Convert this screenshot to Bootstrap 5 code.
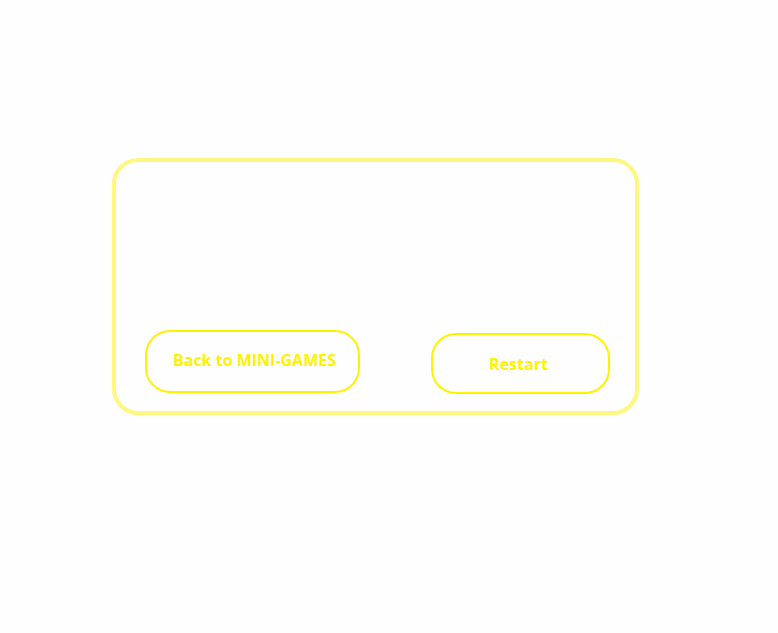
<!DOCTYPE html>
<html lang="en">
<head>
<meta charset="utf-8">
<meta name="viewport" content="width=device-width, initial-scale=1">
<title>Mini-games</title>
<link href="https://cdn.jsdelivr.net/npm/bootstrap@5.3.0/dist/css/bootstrap.min.css" rel="stylesheet">
<style>
body { background: #fefefe; font-family: "Open Sans", "Noto Sans", sans-serif; }
.game-page { padding: 158px 139px 24px 112px; }
.game-panel { min-height: 257px; padding: 24px 25px 17px 29px; border: 4px solid #fff780; border-radius: 26px; }
.game-btn {
  --bs-btn-color: #fff200;
  --bs-btn-border-color: #fff200;
  --bs-btn-hover-color: #fefefe;
  --bs-btn-hover-bg: #fff200;
  --bs-btn-hover-border-color: #fff200;
  --bs-btn-border-width: 2px;
  --bs-btn-border-radius: 25px;
  --bs-btn-font-size: 16px;
  --bs-btn-line-height: 21px;
  --bs-btn-font-weight: 700;
}
.game-btn-back { min-width: 215px; margin-bottom: 1px; padding: 18px 20px 20px 24px; }
.game-btn-restart { min-width: 179px; padding: 19px 28px 17px 24px; }
</style>
</head>
<body>
<main class="game-page">
  <section class="game-panel d-flex flex-wrap justify-content-between align-items-end gap-3" aria-label="Game menu">
    <button type="button" class="btn game-btn game-btn-back">Back to MINI-GAMES</button>
    <button type="button" class="btn game-btn game-btn-restart">Restart</button>
  </section>
</main>
<script src="https://cdn.jsdelivr.net/npm/bootstrap@5.3.0/dist/js/bootstrap.bundle.min.js"></script>
</body>
</html>
